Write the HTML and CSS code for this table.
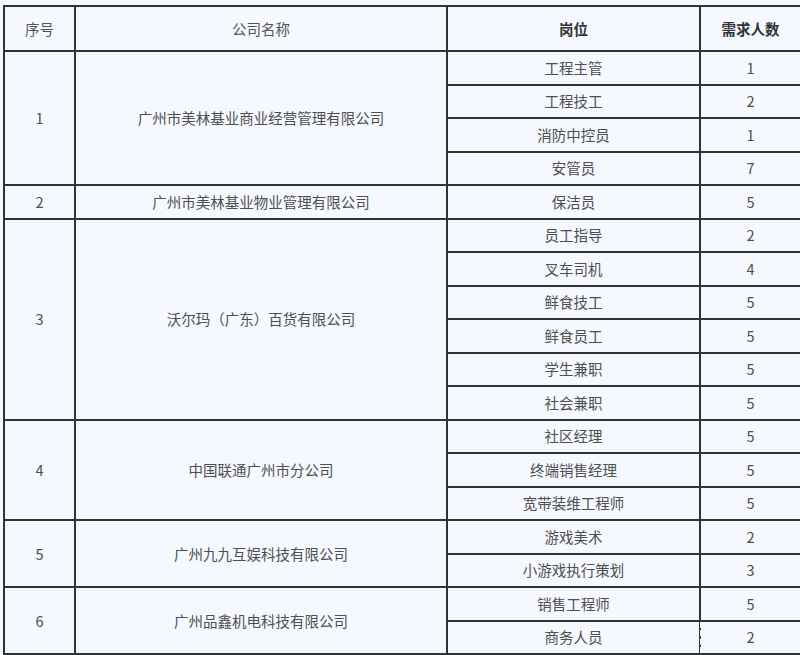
FILE: index.html
```html
<!DOCTYPE html>
<html lang="zh">
<head>
<meta charset="utf-8">
<link rel="stylesheet" href="styles.css">
</head>
<body>
<table class="jobs">
  <colgroup>
    <col class="c-no"><col class="c-co"><col class="c-pos"><col class="c-num">
  </colgroup>
  <thead>
    <tr>
      <th>序号</th>
      <th>公司名称</th>
      <th class="bold">岗位</th>
      <th class="bold">需求人数</th>
    </tr>
  </thead>
  <tbody>
    <tr><td rowspan="4">1</td><td rowspan="4">广州市美林基业商业经营管理有限公司</td><td>工程主管</td><td>1</td></tr>
    <tr><td>工程技工</td><td>2</td></tr>
    <tr><td>消防中控员</td><td>1</td></tr>
    <tr><td>安管员</td><td>7</td></tr>
    <tr><td>2</td><td>广州市美林基业物业管理有限公司</td><td>保洁员</td><td>5</td></tr>
    <tr><td rowspan="6">3</td><td rowspan="6">沃尔玛（广东）百货有限公司</td><td>员工指导</td><td>2</td></tr>
    <tr><td>叉车司机</td><td>4</td></tr>
    <tr><td>鲜食技工</td><td>5</td></tr>
    <tr><td>鲜食员工</td><td>5</td></tr>
    <tr><td>学生兼职</td><td>5</td></tr>
    <tr><td>社会兼职</td><td>5</td></tr>
    <tr><td rowspan="3">4</td><td rowspan="3">中国联通广州市分公司</td><td>社区经理</td><td>5</td></tr>
    <tr><td>终端销售经理</td><td>5</td></tr>
    <tr><td>宽带装维工程师</td><td>5</td></tr>
    <tr><td rowspan="2">5</td><td rowspan="2">广州九九互娱科技有限公司</td><td>游戏美术</td><td>2</td></tr>
    <tr><td>小游戏执行策划</td><td>3</td></tr>
    <tr><td rowspan="2">6</td><td rowspan="2">广州品鑫机电科技有限公司</td><td>销售工程师</td><td>5</td></tr>
    <tr><td>商务人员</td><td class="dashed">2</td></tr>
  </tbody>
</table>
</body>
</html>
```
FILE: styles.css
```css
html, body {
  margin: 0;
  padding: 0;
  background: #f5f8fe;
}
body {
  padding: 5px 0 0 3px;
  overflow: hidden;
  font-family: "Noto Sans CJK SC", "Noto Sans", sans-serif;
  color: #4f4f4f;
  font-size: 14.5px;
}
.jobs {
  border-collapse: collapse;
  table-layout: fixed;
  width: 797px;
}
.c-no { width: 71px; }
.c-co { width: 372px; }
.c-pos { width: 253px; }
.c-num { width: 101px; }
.jobs th, .jobs td {
  border: 2px solid #333;
  text-align: center;
  vertical-align: middle;
  padding: 0;
  line-height: 20px;
}
.jobs th {
  height: 43px;
  font-weight: normal;
  color: #555;
}
.jobs th.bold {
  font-weight: bold;
  color: #333;
}
.jobs td {
  height: 31.5px;
}
.jobs td.dashed {
  position: relative;
}
.jobs td.dashed::before {
  content: "";
  position: absolute;
  top: 0;
  bottom: 0;
  left: -1px;
  right: -1px;
  border-left: 2px dashed #f5f8fe;
  border-right: 2px dashed #f5f8fe;
  pointer-events: none;
}
```
